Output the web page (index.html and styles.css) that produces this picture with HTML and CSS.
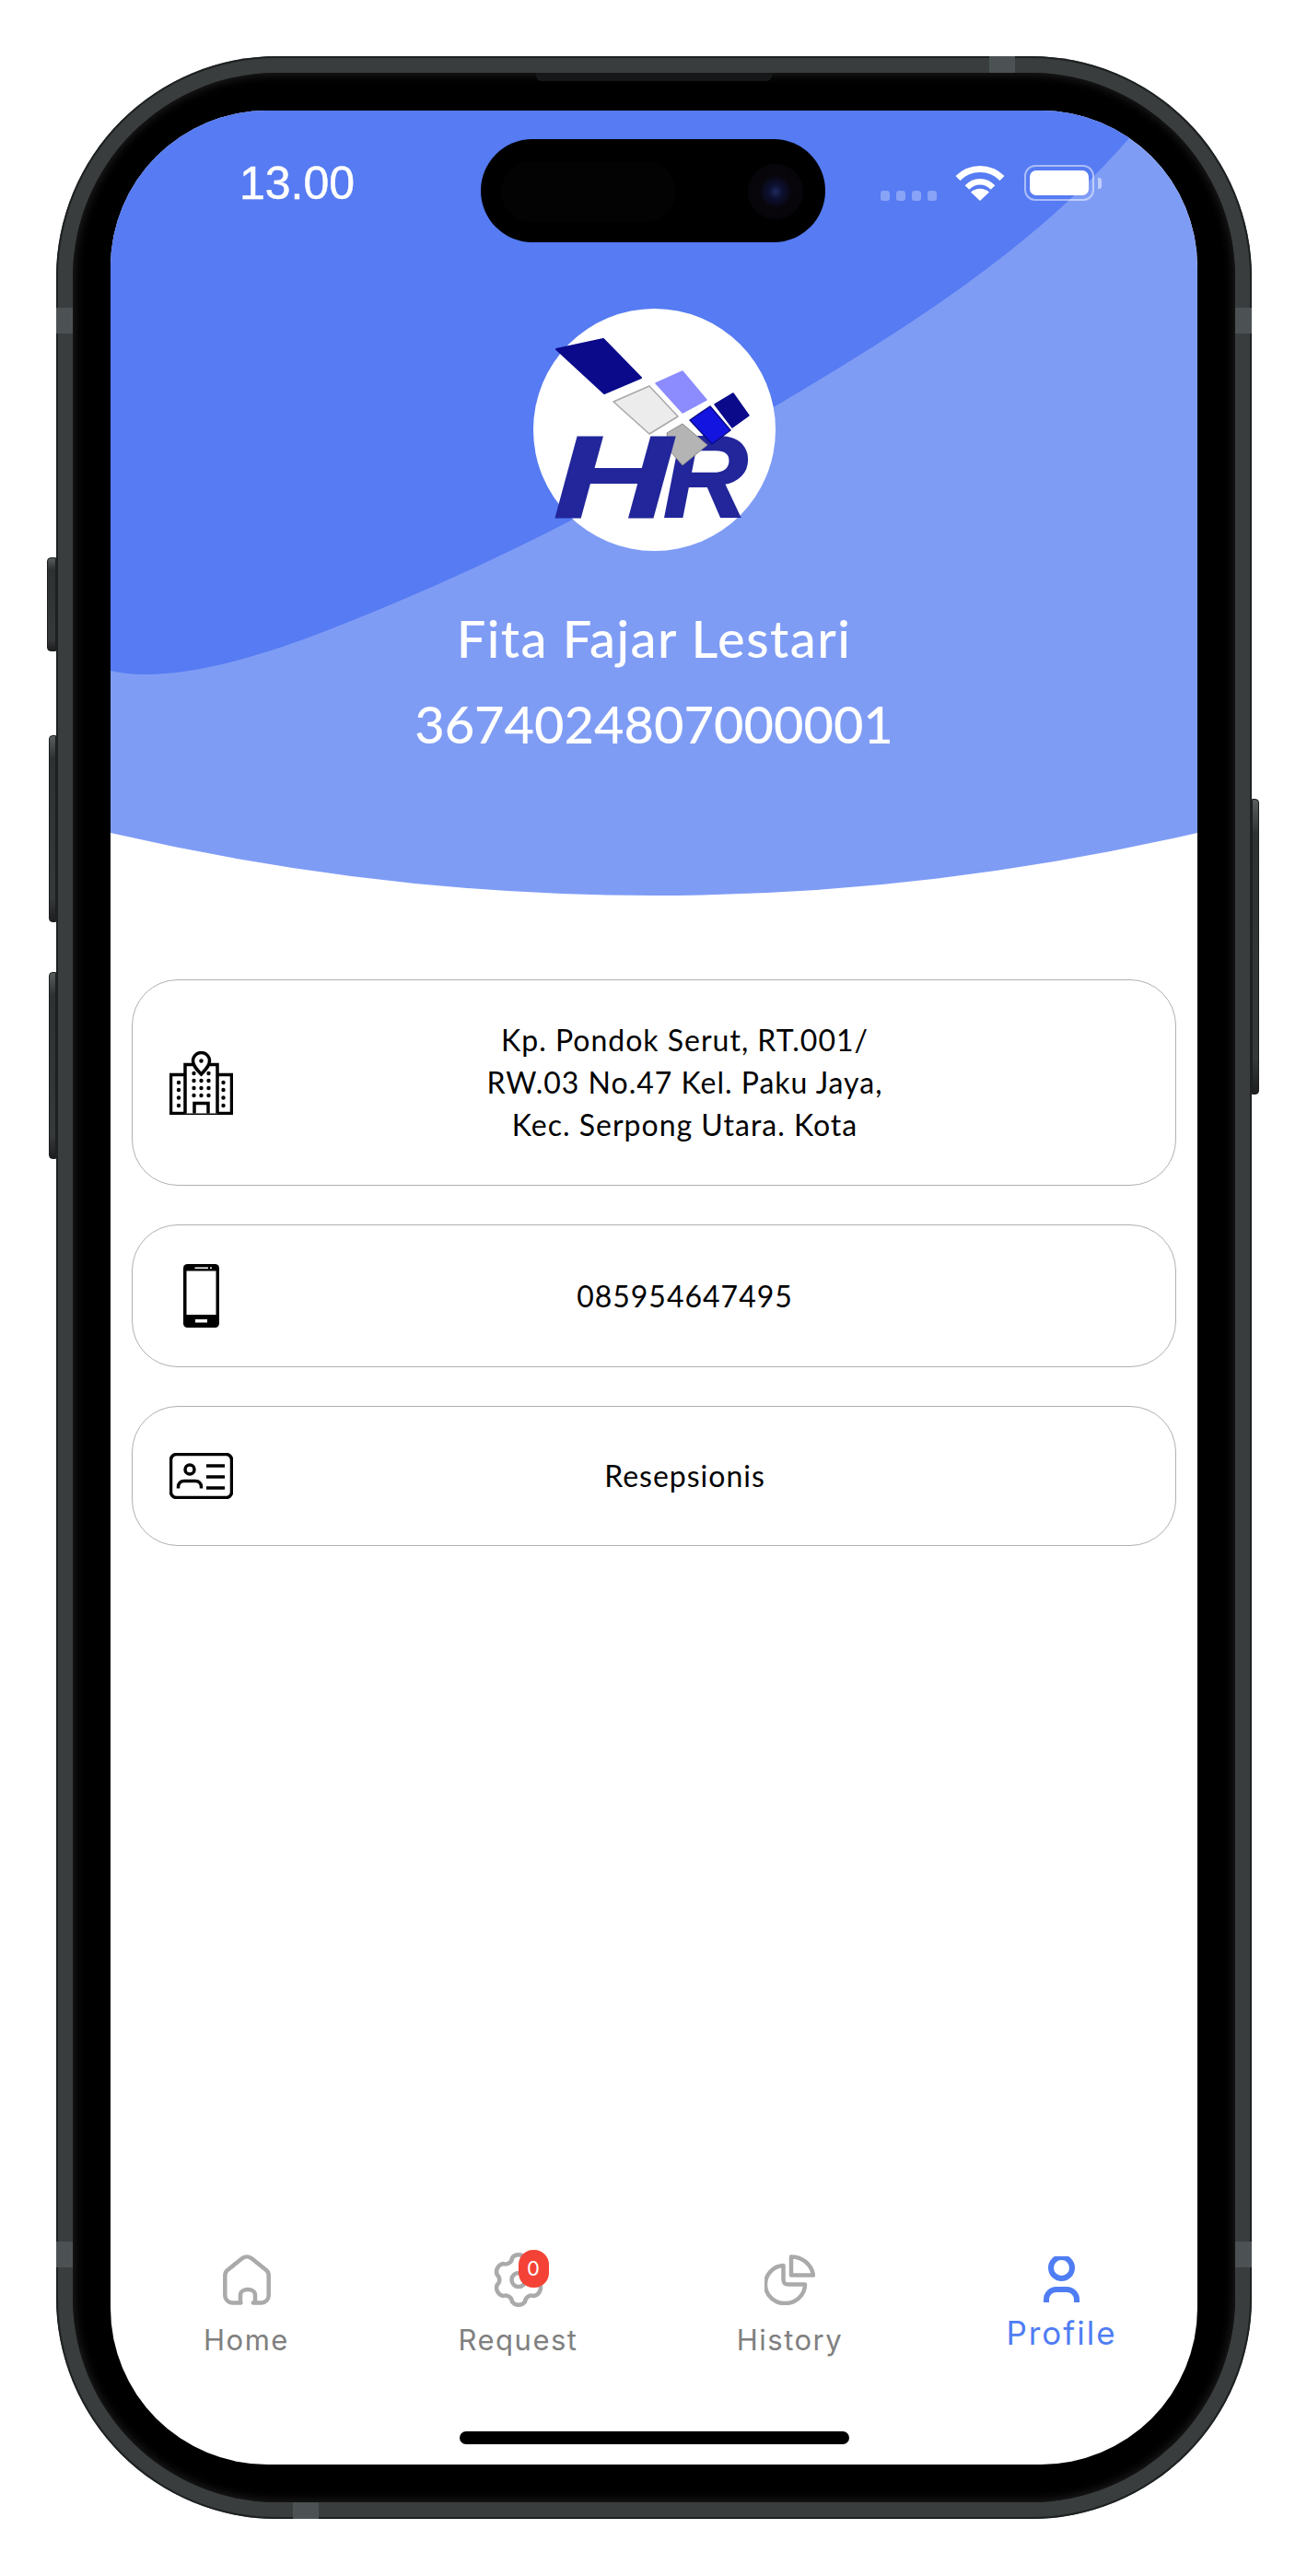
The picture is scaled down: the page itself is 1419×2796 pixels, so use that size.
FILE: index.html
```html
<!doctype html>
<html lang="en">
 <head>
  <meta charset="UTF-8">
  <meta name="viewport" content="width=device-width, initial-scale=1.0">
  <title>Profile</title>
  <link rel="stylesheet" href="styles.css">
 </head>
 <body>
  <div class="phone">
   <!-- hardware details on the frame -->
   <span class="btn btn-mute"></span>
   <span class="btn btn-up"></span>
   <span class="btn btn-down"></span>
   <span class="btn btn-power"></span>
   <span class="band band-top"></span>
   <span class="band band-bottom"></span>
   <span class="band band-l1"></span>
   <span class="band band-l2"></span>
   <span class="band band-r1"></span>
   <span class="band band-r2"></span>
   <div class="bezel">
    <span class="speaker"></span>
    <div class="screen">
     <div class="island"><span class="sensor"></span><span class="camera"></span></div>

     <header class="hero">
      <svg class="hero-bg" viewBox="0 0 1180 852" preserveAspectRatio="none" aria-hidden="true">
       <path fill="#7f9cf5" d="M0 0H1180V784Q590 920 0 784Z"/>
       <path fill="#567bf2" d="M0 0H1122L1106 30C1010 140 890 220 760 298C600 395 430 490 220 570C130 604 50 620 0 608Z"/>
      </svg>
      <div class="status">
       <span class="time">13.00</span>
       <div class="status-icons">
        <span class="dots"><i></i><i></i><i></i><i></i></span>
        <svg class="wifi" width="54" height="39" viewBox="0 0 54 39" fill="none" stroke="#fff">
         <path stroke-width="7" d="M3 14.500C16 1 38 1 51 14.500"/>
         <path stroke-width="6.500" d="M13 24.500C21 16 33 16 41 24.500"/>
         <path fill="#fff" stroke="none" d="M27 39L17 29.500C23 24.500 31 24.500 37 29.500Z"/>
        </svg>
        <span class="battery"><i></i></span>
        <span class="battery-nub"></span>
       </div>
      </div>
      <svg class="logo" width="263" height="263" viewBox="0 0 263 263">
       <circle cx="131.500" cy="131.500" r="131.500" fill="#fff"/>
       <polygon points="25,44 76,33 117,75 77,92" fill="#0a0a8a" stroke="#0a0a8a" stroke-width="2" stroke-linejoin="round"/>
       <polygon points="87,101 126,84 157,117 126,136" fill="#ececec" stroke="#a8a8a8" stroke-width="1.500" stroke-linejoin="round"/>
       <polygon points="133,81 162,68 188,99 162,113" fill="#8c8cff" stroke="#8c8cff" stroke-width="1.500" stroke-linejoin="round"/>
       <text class="logo-text" x="141" y="226" textLength="92" lengthAdjust="spacingAndGlyphs">R</text>
       <polygon points="145,135 162,125 189,148 162,170 148,154" fill="#b4b4b4" stroke="#8a8a8a" stroke-width="1" stroke-linejoin="round"/>
       <text class="logo-text" x="22" y="226" textLength="128" lengthAdjust="spacingAndGlyphs">H</text>
       <polygon points="170,121 192,106 214,132 194,147" fill="#1414e0" stroke="#0a0a8a" stroke-width="1.500" stroke-linejoin="round"/>
       <polygon points="197,104 217,92 234,116 216,129" fill="#0a0a8a" stroke="#0a0a8a" stroke-width="1.500" stroke-linejoin="round"/>
      </svg>
      <h1 class="name">Fita Fajar Lestari</h1>
      <p class="nik">3674024807000001</p>
     </header>

     <section class="info-list">
      <div class="info-card">
       <svg class="info-icon" width="69" height="69" viewBox="0 0 69 69" fill="none" stroke="#000" stroke-width="3.500">
        <path fill="#fff" d="M17 25.500H1.500V67.500H67.500V25.500H52"/>
        <path fill="#fff" d="M17 67.500V14.500H52V67.500"/>
        <path fill="#fff" d="M34.500 25C30 20 25.500 16 25.500 10.500A9 9 0 0 1 43.500 10.500C43.500 16 39 20 34.500 25Z"/>
        <circle cx="34.500" cy="10.500" r="2.200" fill="#000" stroke="none"/>
        <path d="M27 67.500V56.500H42V67.500"/>
        <g fill="#000" stroke="none">
         <circle cx="10" cy="34" r="2.200"/><circle cx="10" cy="42" r="2.200"/><circle cx="10" cy="50.500" r="2.200"/><circle cx="10" cy="59" r="2.200"/>
         <circle cx="58.500" cy="34" r="2.200"/><circle cx="58.500" cy="42" r="2.200"/><circle cx="58.500" cy="50.500" r="2.200"/><circle cx="58.500" cy="59" r="2.200"/>
         <circle cx="26.500" cy="24" r="2.200"/><circle cx="42.500" cy="24" r="2.200"/>
         <circle cx="26.500" cy="32" r="2.200"/><circle cx="34.500" cy="32" r="2.200"/><circle cx="42.500" cy="32" r="2.200"/>
         <circle cx="26.500" cy="40" r="2.200"/><circle cx="34.500" cy="40" r="2.200"/><circle cx="42.500" cy="40" r="2.200"/>
         <circle cx="26.500" cy="48" r="2.200"/><circle cx="34.500" cy="48" r="2.200"/><circle cx="42.500" cy="48" r="2.200"/>
        </g>
       </svg>
       <p class="info-text">Kp. Pondok Serut, RT.001/<br>RW.03 No.47 Kel. Paku Jaya,<br>Kec. Serpong Utara. Kota</p>
      </div>
      <div class="info-card">
       <span class="info-icon icon-slot">
        <svg width="39" height="69" viewBox="0 0 39 69">
         <rect width="39" height="69" rx="4.500" fill="#000"/>
         <rect x="3.500" y="7.500" width="32" height="47.500" fill="#fff"/>
         <rect x="12.500" y="3.500" width="14.500" height="1.500" fill="#fff"/>
         <circle cx="30" cy="4.200" r="1" fill="#fff"/>
         <rect x="13" y="60" width="13" height="3.500" fill="#fff"/>
        </svg>
       </span>
       <p class="info-text">085954647495</p>
      </div>
      <div class="info-card">
       <svg class="info-icon" width="69" height="50" viewBox="0 0 69 50" fill="none" stroke="#000" stroke-width="3.500">
        <rect x="1.500" y="1.500" width="66" height="47" rx="6"/>
        <circle cx="22" cy="18" r="5"/>
        <path d="M9.500 38.500V37C9.500 33 12 30.500 16 30.500H28C32 30.500 34.500 33 34.500 37V38.500"/>
        <path d="M40 14H60M40 26H60M40 38H60"/>
       </svg>
       <p class="info-text">Resepsionis</p>
      </div>
     </section>

     <nav class="tabbar">
      <a class="tab">
       <svg class="tab-icon" width="52" height="55" viewBox="0 0 52 55" fill="none" stroke="#aaa" stroke-width="4.500" stroke-linejoin="round">
        <path d="M19 52.500H10A8 8 0 0 1 2.300 44.500V22.500A7 7 0 0 1 5 17L20.500 4.500A8.500 8.500 0 0 1 31.500 4.500L47 17A7 7 0 0 1 49.700 22.500V44.500A8 8 0 0 1 42 52.500H33C32 52.500 35 52.500 35 50V44C35 36 19 36 19 44V50C19 52.500 20 52.500 19 52.500Z"/>
       </svg>
       <span class="tab-label">Home</span>
      </a>
      <a class="tab">
       <span class="tab-icon gear-wrap">
        <svg width="52" height="55" viewBox="0 0 52 55" fill="none" stroke="#aaa" stroke-width="4.500" stroke-linejoin="round">
         <path d="M19 3.600A9 9 0 0 1 33 3.600A7 7 0 0 0 42.400 10A9 9 0 0 1 49.400 22A7 7 0 0 0 49.400 33A9 9 0 0 1 42.400 45A7 7 0 0 0 33 51.400A9 9 0 0 1 19 51.400A7 7 0 0 0 9.600 45A9 9 0 0 1 2.600 33A7 7 0 0 0 2.600 22A9 9 0 0 1 9.600 10A7 7 0 0 0 19 3.600Z"/>
         <circle cx="26" cy="27.500" r="7.500"/>
        </svg>
        <span class="badge">0</span>
       </span>
       <span class="tab-label">Request</span>
      </a>
      <a class="tab">
       <svg class="tab-icon" width="55" height="55" viewBox="0 0 55 55" fill="none" stroke="#aaa" stroke-width="4.500" stroke-linejoin="round">
        <path d="M20.500 12V27C20.500 31 22 32.500 26 32.500H44C44 44 34 53 22.500 53A20.300 20.300 0 0 1 20.500 12Z"/>
        <path d="M29 2.500V22.500H53A24 24 0 0 0 29 2.500Z"/>
       </svg>
       <span class="tab-label">History</span>
      </a>
      <a class="tab tab-active">
       <svg class="tab-icon" width="39" height="50" viewBox="0 0 39 50" fill="none" stroke="#4f7df3" stroke-width="6">
        <circle cx="19.500" cy="12.500" r="11.500"/>
        <path d="M3 50V47A11 11 0 0 1 14 36H25A11 11 0 0 1 36 47V50"/>
       </svg>
       <span class="tab-label">Profile</span>
      </a>
     </nav>
     <div class="home-bar"></div>
    </div>
   </div>
  </div>
 </body>
</html>
```

FILE: styles.css
```css
* {
  box-sizing: border-box;
}
html, body {
  margin: 0;
  padding: 0;
  background-color: #fff;
}
body {
  font-family: "Lato", sans-serif;
  padding: 61px;
  height: 2796px;
  overflow: hidden;
}

/* phone frame */
.phone {
  position: relative;
  width: 1298px;
  height: 2673px;
  padding: 18px;
  border-radius: 240px;
  background-color: #3a3d3e;
  box-shadow: inset 0 0 0 2px #1e2122;
}
.bezel {
  position: relative;
  height: 100%;
  padding: 41px;
  border-radius: 222px;
  background-color: #000;
  box-shadow: inset 0 0 12px 1px #232323;
}
.speaker {
  position: absolute;
  top: 0;
  left: 503px;
  width: 256px;
  height: 9px;
  border-radius: 0 0 6px 6px;
  background-color: #161718;
}
.btn {
  position: absolute;
  background: linear-gradient(#5a5d5e, #2e3132 12%, #36393a 88%, #1c1e1f);
  border: 1px solid #1c1e1f;
}
.btn-mute {
  left: -10px;
  top: 544px;
  width: 10px;
  height: 102px;
  border-radius: 4px 0 0 4px;
}
.btn-up {
  left: -8px;
  top: 737px;
  width: 8px;
  height: 203px;
  border-radius: 4px 0 0 4px;
}
.btn-down {
  left: -8px;
  top: 994px;
  width: 8px;
  height: 203px;
  border-radius: 4px 0 0 4px;
}
.btn-power {
  right: -8px;
  top: 806px;
  width: 8px;
  height: 321px;
  border-radius: 0 4px 4px 0;
}
.band {
  position: absolute;
  background-color: #4c5253;
}
.band-top {
  top: 0;
  left: 1013px;
  width: 28px;
  height: 18px;
}
.band-bottom {
  bottom: 0;
  left: 257px;
  width: 28px;
  height: 18px;
}
.band-l1, .band-r1, .band-l2, .band-r2 {
  width: 18px;
  height: 28px;
}
.band-l1 {
  left: 0;
  top: 273px;
}
.band-r1 {
  right: 0;
  top: 273px;
}
.band-l2 {
  left: 0;
  top: 2372px;
}
.band-r2 {
  right: 0;
  top: 2372px;
}

/* screen */
.screen {
  position: relative;
  display: flex;
  flex-direction: column;
  width: 1180px;
  height: 2555px;
  border-radius: 170px;
  background-color: #fff;
  overflow: hidden;
}
.island {
  position: absolute;
  z-index: 3;
  top: 31px;
  left: 402px;
  width: 374px;
  height: 112px;
  border-radius: 56px;
  background-color: #000;
}
.sensor {
  position: absolute;
  left: 22px;
  top: 24px;
  width: 190px;
  height: 66px;
  border-radius: 33px;
  background-color: #030303;
}
.camera {
  position: absolute;
  left: 290px;
  top: 27px;
  width: 60px;
  height: 60px;
  border-radius: 50%;
  background: radial-gradient(circle, #1f2a5c 0, #0c1030 18%, #0a0a1c 34%, #08060a 40%, #060408 95%, #000 100%);
}

/* header */
.hero {
  position: relative;
  height: 852px;
  text-align: center;
  color: #fff;
}
.hero-bg {
  position: absolute;
  top: 0;
  left: 0;
  width: 100%;
  height: 100%;
}
.status, .logo, .name, .nik {
  position: relative;
}
.status {
  display: flex;
  justify-content: space-between;
  height: 98px;
  padding: 59px 104px 0 140px;
}
.time {
  font-family: "Liberation Sans", Arial, sans-serif;
  font-size: 50px;
  line-height: 46px;
  margin-top: -3px;
  -webkit-text-stroke: 0.5px #fff;
}
.status-icons {
  display: flex;
  align-items: flex-start;
}
.dots {
  display: flex;
  gap: 7px;
  margin-top: 28px;
  margin-right: 20px;
}
.dots i {
  width: 10px;
  height: 11px;
  border-radius: 3px;
  background-color: rgba(255, 255, 255, 0.3);
}
.battery {
  width: 76px;
  height: 39px;
  margin-left: 21px;
  padding: 4px;
  border: 2px solid rgba(255, 255, 255, 0.5);
  border-radius: 12px;
}
.battery i {
  display: block;
  height: 27px;
  border-radius: 7px;
  background-color: #fff;
}
.battery-nub {
  width: 4px;
  height: 12px;
  margin-top: 14px;
  margin-left: 4px;
  border-radius: 0 3px 3px 0;
  background-color: rgba(255, 255, 255, 0.5);
}
.logo {
  display: block;
  margin: 117px auto 0;
}
.logo-text {
  font-family: "Liberation Sans", Arial, sans-serif;
  font-size: 126px;
  font-weight: bold;
  font-style: italic;
  fill: #22269a;
  stroke: #22269a;
  stroke-width: 2px;
}
.name {
  margin: 48px 0 0;
  font-size: 56px;
  font-weight: 500;
  line-height: 93px;
  letter-spacing: 1.5px;
}
.nik {
  margin: 0;
  font-size: 56px;
  font-weight: 500;
  line-height: 93px;
}

/* info cards */
.info-list {
  display: flex;
  flex-direction: column;
  gap: 42px;
  margin: 91px 23px 0 23px;
}
.info-card {
  display: flex;
  align-items: center;
  min-height: 152px;
  padding: 42px 42px 42px 40px;
  border: 1px solid #b0b0b0;
  border-radius: 50px;
}
.info-card + .info-card {
  min-height: 151.500px;
}
.info-icon {
  flex: none;
}
.icon-slot {
  display: flex;
  justify-content: center;
  width: 69px;
}
.info-text {
  flex: 1;
  margin: 0;
  font-size: 32px;
  line-height: 46px;
  letter-spacing: 1px;
  text-align: center;
  color: #000;
}

/* bottom navigation */
.tabbar {
  display: grid;
  grid-template-columns: repeat(4, 1fr);
  margin-top: auto;
  font-family: "Inter", sans-serif;
}
.tab {
  display: flex;
  flex-direction: column;
  align-items: center;
  color: #808080;
}
.tab-icon {
  display: block;
}
.gear-wrap {
  position: relative;
  width: 52px;
  height: 55px;
}
.gear-wrap svg {
  display: block;
  overflow: visible;
}
.badge {
  position: absolute;
  top: -5px;
  left: 26px;
  width: 33px;
  height: 41px;
  border-radius: 16px;
  background-color: #f44336;
  color: #fff;
  font-size: 22px;
  line-height: 41px;
  text-align: center;
}
.tab-label {
  margin-top: 18px;
  font-size: 31px;
  line-height: 40px;
  letter-spacing: 1.5px;
}
.tab-active {
  color: #4f7df3;
  padding-top: 2px;
}
.tab-active .tab-label {
  margin-top: 13px;
  font-size: 35px;
  letter-spacing: 2px;
}
.home-bar {
  flex: none;
  width: 423px;
  height: 14px;
  margin: 79px auto 22px;
  border-radius: 7px;
  background-color: #000;
}
```
